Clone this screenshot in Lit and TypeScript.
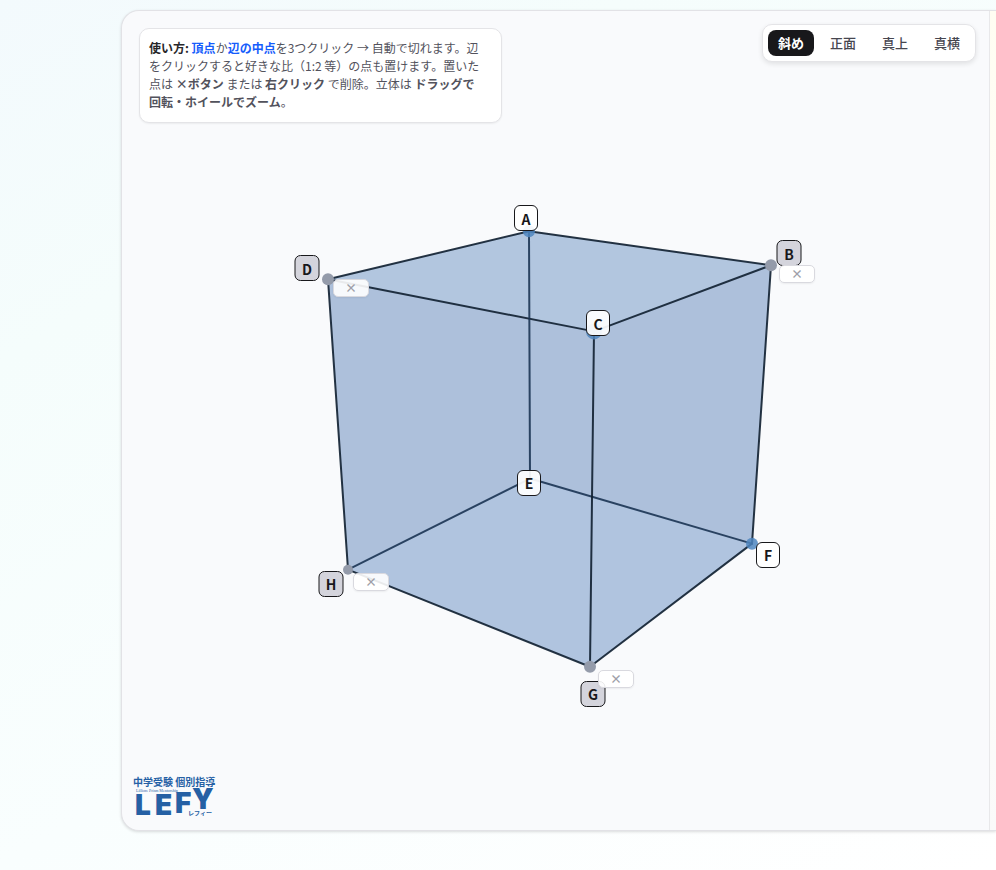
import { LitElement, html, svg, css } from "lit";
import { customElement, state } from "lit/decorators.js";
import { classMap } from "lit/directives/class-map.js";
import { styleMap } from "lit/directives/style-map.js";

const W = 867;
const H = 818;

interface Vertex {
  name: string;
  x: number;
  y: number;
  r: number;
  tag: [number, number];
  remove?: [number, number];
}

const VERTICES: Vertex[] = [
  { name: "A", x: 407, y: 220, r: 6, tag: [404, 207] },
  { name: "B", x: 649, y: 254, r: 6, tag: [667, 242], remove: [675, 263] },
  { name: "C", x: 472, y: 320, r: 8, tag: [476, 312] },
  { name: "D", x: 206, y: 268, r: 6, tag: [185, 257], remove: [229, 277] },
  { name: "E", x: 408, y: 467, r: 5, tag: [407, 471] },
  { name: "F", x: 630, y: 532, r: 6, tag: [646, 543] },
  { name: "G", x: 468, y: 655, r: 6, tag: [471, 682], remove: [494, 667] },
  { name: "H", x: 226, y: 558, r: 5, tag: [209, 572], remove: [249, 570] },
];

const EDGES = ["AB", "BC", "CD", "DA", "EF", "FG", "GH", "HE", "AE", "BF", "CG", "DH"];
const HIDDEN = ["AE", "EF", "HE"];
const VIEWS = ["斜め", "正面", "真上", "真横"];

const at = (name: string) => VERTICES.find((v) => v.name === name)!;
const place = ([x, y]: [number, number]) => ({
  left: `${(x / W) * 100}%`,
  top: `${(y / H) * 100}%`,
});

@customElement("solid-scene")
export class SolidScene extends LitElement {
  static styles = css`
    :host {
      display: block;
      position: absolute;
      inset: 0;
    }
    .drawing {
      display: block;
      width: 100%;
      height: 100%;
    }
    .edge {
      stroke: #101f30;
      stroke-opacity: 0.9;
      stroke-width: 2;
      stroke-linecap: round;
    }
    .edge.hidden {
      stroke: #1b3453;
    }
    .top {
      fill: #b2c6df;
    }
    .side {
      fill: #adc0db;
    }
    .base {
      fill: #b0c4df;
    }
    .dot {
      fill: #4f86c0;
      fill-opacity: 0.85;
    }
    .dot.used {
      fill: #949baa;
      fill-opacity: 1;
    }
    .tag,
    .remove {
      position: absolute;
      transform: translate(-50%, -50%);
      display: flex;
      align-items: center;
      justify-content: center;
      box-sizing: border-box;
      margin: 0;
      font-family: "Noto Sans CJK JP", sans-serif;
    }
    .tag {
      width: 24px;
      height: 26px;
      padding: 1px 0 0;
      border: 1px solid #18181b;
      border-radius: 6px;
      background: rgba(255, 255, 255, 0.92);
      color: #18181b;
      font-size: 14px;
      font-weight: 700;
      line-height: 20px;
    }
    .tag.used {
      width: 25px;
      background: #d4d4dc;
    }
    .remove {
      width: 36px;
      height: 18px;
      padding: 0;
      border: 1px solid #d9d9df;
      border-radius: 5px;
      background: rgba(255, 255, 255, 0.9);
      box-shadow: 0 1px 2px rgba(0, 0, 0, 0.06);
      color: #9f9fa9;
      font-size: 12px;
      font-weight: 700;
      line-height: 16px;
    }
  `;

  private polygon(names: string, cls: string) {
    const points = [...names].map((n) => `${at(n).x},${at(n).y}`).join(" ");
    return svg`<polygon class=${cls} points=${points}></polygon>`;
  }

  private edge(name: string) {
    const a = at(name[0]);
    const b = at(name[1]);
    return svg`<line class=${classMap({ edge: true, hidden: HIDDEN.includes(name) })}
      x1=${a.x} y1=${a.y} x2=${b.x} y2=${b.y}></line>`;
  }

  render() {
    return html`
      <svg class="drawing" viewBox="0 0 ${W} ${H}" preserveAspectRatio="none" aria-hidden="true">
        ${this.polygon("DABFGH", "side")} ${this.polygon("ABCD", "top")}
        ${this.polygon("EFGH", "base")}
        ${EDGES.map((e) => this.edge(e))}
        ${VERTICES.filter((v) => v.name !== "E").map(
          (v) => svg`<circle class=${classMap({ dot: true, used: !!v.remove })}
            cx=${v.x} cy=${v.y} r=${v.r}></circle>`,
        )}
      </svg>
      ${VERTICES.map(
        (v) => html`
          <button class=${classMap({ tag: true, used: !!v.remove })} style=${styleMap(place(v.tag))}>
            ${v.name}
          </button>
          ${v.remove
            ? html`<button class="remove" style=${styleMap(place(v.remove))}>×</button>`
            : null}
        `,
      )}
    `;
  }
}

@customElement("brand-logo")
export class BrandLogo extends LitElement {
  static styles = css`
    :host {
      display: block;
    }
    .mark {
      display: block;
      width: 84px;
      height: 44px;
      overflow: visible;
      fill: #2560a4;
    }
    .line {
      font: 700 10px "Noto Sans CJK JP", sans-serif;
    }
    .fine {
      font: 4px "Liberation Serif", serif;
    }
    .big {
      font: 900 28px Inter, sans-serif;
    }
    .kana {
      font: 700 6px "Noto Sans CJK JP", sans-serif;
    }
  `;

  render() {
    return html`
      <svg class="mark" viewBox="0 0 84 44" role="img" aria-label="中学受験 個別指導 LEFY レフィー">
        <text class="line" x="1" y="11">中学受験 個別指導</text>
        <text class="fine" x="4" y="17">Lilliore Prism Mentorship</text>
        <text class="big" x="3" y="40">L</text>
        <text class="big" x="23" y="40">E</text>
        <text class="big" x="43" y="38">F</text>
        <text class="big" x="60" y="34">Y</text>
        <text class="kana" x="56" y="40">レフィー</text>
      </svg>
    `;
  }
}

@customElement("app-root")
export class AppRoot extends LitElement {
  static styles = css`
    :host {
      display: block;
      font-family: "Noto Sans CJK JP", sans-serif;
      color: #52525c;
    }
    .page {
      box-sizing: border-box;
      min-height: 100vh;
      display: flex;
      padding: 10px 0 39px 121px;
      background: linear-gradient(150deg, #f3fafd 0%, #f5fdfc 25%, #f9fefe 60%, #ffffff 100%);
    }
    .card {
      flex: 1;
      display: flex;
      border: 1px solid #e2e2e6;
      border-right: 0;
      border-radius: 18px 0 0 18px;
      box-shadow: 0 1px 3px rgba(0, 0, 0, 0.14);
      overflow: hidden;
      background: #f9fafc;
    }
    .stage {
      position: relative;
      flex: 1;
      display: flex;
      flex-direction: column;
      justify-content: space-between;
    }
    .side {
      width: 6px;
      border-left: 1px solid #e8e8ea;
      background: linear-gradient(#fffdf2, #fffefa 60%, #fafafa);
    }
    .bar {
      position: relative;
      display: flex;
      justify-content: space-between;
      align-items: flex-start;
      padding: 13px 13px 0 17px;
      pointer-events: none;
    }
    .help {
      box-sizing: border-box;
      width: 363px;
      margin: 4px 0 0;
      padding: 10px 19px 11px 9px;
      border: 1px solid #e4e4e7;
      border-radius: 10px;
      background: #fff;
      box-shadow: 0 1px 2px rgba(0, 0, 0, 0.06);
      font-size: 12px;
      line-height: 18px;
    }
    .lead {
      color: #27272a;
    }
    .key {
      color: #155dfc;
    }
    .views {
      display: flex;
      gap: 6px;
      padding: 5px;
      border: 1px solid #e4e4e7;
      border-radius: 10px;
      background: #fff;
      box-shadow: 0 2px 5px rgba(0, 0, 0, 0.1);
      pointer-events: auto;
    }
    .view {
      margin: 0;
      padding: 3px 10px;
      border: 0;
      border-radius: 8px;
      background: none;
      color: #46464f;
      font: 500 13px/20px "Noto Sans CJK JP", sans-serif;
    }
    .view.on {
      background: #18181b;
      color: #fff;
      font-weight: 700;
    }
    .foot {
      position: relative;
      padding: 0 0 11px 10px;
    }
  `;

  @state() private view = VIEWS[0];

  render() {
    return html`
      <main class="page">
        <div class="card">
          <section class="stage">
            <solid-scene></solid-scene>
            <div class="bar">
              <p class="help">
                <b class="lead">使い方:</b> <b class="key">頂点</b>か<b class="key">辺の中点</b>を3つクリック →
                自動で切れます。辺をクリックすると好きな比（1:2 等）の点も置けます。置いた点は
                <b>×ボタン</b> または <b>右クリック</b> で削除。立体は <b>ドラッグで回転・ホイールでズーム</b>。
              </p>
              <nav class="views">
                ${VIEWS.map(
                  (name) => html`<button
                    class=${classMap({ view: true, on: name === this.view })}
                    @click=${() => (this.view = name)}
                  >${name}</button>`,
                )}
              </nav>
            </div>
            <div class="foot"><brand-logo></brand-logo></div>
          </section>
          <aside class="side"></aside>
        </div>
      </main>
    `;
  }
}
